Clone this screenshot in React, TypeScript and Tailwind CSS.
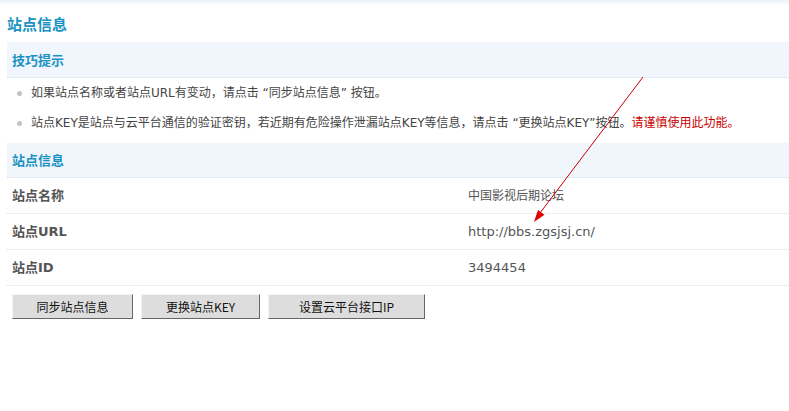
import React from "react";

const FONT = "font-['DejaVu_Sans','Noto_Sans_CJK_SC',sans-serif]";

export default function App() {
  const rows: { label: string; value: React.ReactNode }[] = [
    { label: "站点名称", value: <span className="text-[12px]">中国影视后期论坛</span> },
    { label: "站点URL", value: <span className="text-[13px]">http://bbs.zgsjsj.cn/</span> },
    { label: "站点ID", value: <span className="text-[13px]">3494454</span> },
  ];
  return (
    <div className={`relative w-[789px] h-[411px] overflow-hidden bg-white ${FONT} text-[12px] text-[#444]`}>
      <div className="h-[6px] bg-gradient-to-b from-[#e9f2f9] to-white" />
      <div className="pl-[7px]">
        <h3 className="h-[36px] flex items-center text-[15px] font-bold text-[#1a93c4] font-['Noto_Sans_CJK_SC',sans-serif]">
          站点信息
        </h3>
        <div className="h-[36px] flex items-center px-[5px] bg-[#f0f6fc] border-b border-dotted border-[#d3e2ee] text-[13px] font-bold text-[#1a93c4] font-['Noto_Sans_CJK_SC',sans-serif]">
          技巧提示
        </div>
        <ul className="pb-[5px]">
          <li className="h-[30px] flex items-center pl-[10px]">
            <span className="w-[5px] h-[5px] rounded-full bg-[#c4c4c4] mr-[9px]" />
            <span>如果站点名称或者站点URL有变动，请点击 “同步站点信息” 按钮。</span>
          </li>
          <li className="h-[30px] flex items-center pl-[10px]">
            <span className="w-[5px] h-[5px] rounded-full bg-[#c4c4c4] mr-[9px]" />
            <span>
              站点KEY是站点与云平台通信的验证密钥，若近期有危险操作泄漏站点KEY等信息，请点击 “更换站点KEY”按钮。
              <span className="text-[#cc0000]">请谨慎使用此功能。</span>
            </span>
          </li>
        </ul>
        <div className="h-[35px] flex items-center px-[5px] bg-[#f0f6fc] border-b border-dotted border-[#d3e2ee] text-[13px] font-bold text-[#1a93c4] font-['Noto_Sans_CJK_SC',sans-serif]">
          站点信息
        </div>
        {rows.map((r) => (
          <div key={r.label} className="h-[36px] flex items-center border-b border-dotted border-[#d3e2ee]">
            <div className="w-[456px] px-[5px] text-[13px] font-bold text-[#555]">{r.label}</div>
            <div className="px-[5px] text-[#555]">{r.value}</div>
          </div>
        ))}
        <div className="flex gap-[8px] pl-[5px] mt-[8px]">
          {[
            { t: "同步站点信息", w: "w-[121px]" },
            { t: "更换站点KEY", w: "w-[119px]" },
            { t: "设置云平台接口IP", w: "w-[157px]" },
          ].map((b) => (
            <button
              key={b.t}
              className={`${b.w} h-[25px] bg-[#dddddd] border border-solid border-t-[#f4f4f4] border-l-[#f4f4f4] border-r-[#666] border-b-[#666] text-[12px] text-[#111] font-['Noto_Sans_CJK_SC',sans-serif] flex items-center justify-center`}
            >
              {b.t}
            </button>
          ))}
        </div>
      </div>
      <svg className="absolute left-0 top-0 pointer-events-none" width="789" height="411">
        <line x1="643" y1="77" x2="540" y2="213" stroke="#cc0000" strokeWidth="1" />
        <polygon points="534,222 544.4,214.8 538,210" fill="#e00000" />
      </svg>
    </div>
  );
}
